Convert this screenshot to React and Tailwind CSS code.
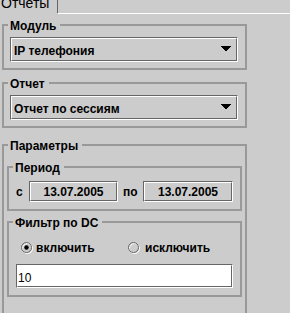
import React from "react";

function Group({ title, className, children }) {
  return (
    <div className={"relative border-2 border-[#999999] " + className}>
      <span className="absolute left-[4px] top-[-7px] bg-[#cccccc] pl-[2px] pr-[4px] text-[12px] font-bold leading-[14px] text-black whitespace-nowrap">
        {title}
      </span>
      {children}
    </div>
  );
}

function Flush({ className, innerClassName, children }) {
  return (
    <div className={"border border-t-[#666666] border-l-[#666666] border-r-white border-b-white " + className}>
      <div className={"h-full border border-t-white border-l-white border-r-[#666666] border-b-[#666666] " + innerClassName}>
        {children}
      </div>
    </div>
  );
}

function Arrow() {
  return (
    <svg width="10" height="5" viewBox="0 0 10 5" shapeRendering="crispEdges" className="mt-[7px] shrink-0">
      <rect x="0" y="0" width="10" height="1" fill="#000" />
      <rect x="1" y="1" width="8" height="1" fill="#000" />
      <rect x="2" y="2" width="6" height="1" fill="#000" />
      <rect x="3" y="3" width="4" height="1" fill="#000" />
      <rect x="4" y="4" width="2" height="1" fill="#000" />
    </svg>
  );
}

function Combo({ text }) {
  return (
    <Flush className="h-[25px] w-[228px] ml-[6px]" innerClassName="flex items-start justify-between pl-[2px] pr-[5px]">
      <span className="mt-[5px] text-[12px] font-bold leading-[14px] text-black whitespace-nowrap">{text}</span>
      <Arrow />
    </Flush>
  );
}

function Radio({ checked }) {
  return (
    <svg width="12" height="12" viewBox="0 0 12 12" className="shrink-0">
      <circle cx="6.5" cy="6.5" r="5" fill="none" stroke="#ffffff" strokeWidth="1" />
      <circle cx="5.5" cy="5.5" r="5" fill="none" stroke="#666666" strokeWidth="1" />
      {checked && <circle cx="5.5" cy="5.5" r="2.2" fill="#000000" />}
    </svg>
  );
}

export default function App() {
  return (
    <div className="w-[290px] h-[313px] overflow-hidden bg-[#cccccc] font-['Liberation_Sans',Arial,sans-serif] text-black">
      {/* tab strip */}
      <div className="flex h-[14px]">
        <div className="h-[13px] w-[58px] border-r border-[#666666] overflow-hidden">
          <div className="mt-[-4px] pl-[1px] text-[14px] leading-[14px] whitespace-nowrap">Отчеты</div>
        </div>
        <div className="flex-1 border-b border-white" />
      </div>

      <Group title="Модуль" className="ml-[2px] mt-[10px] w-[245px] pt-[11px] pb-[6px]">
        <Combo text="IP телефония" />
      </Group>

      <Group title="Отчет" className="ml-[2px] mt-[12px] w-[245px] pt-[11px] pb-[6px]">
        <Combo text="Отчет по сессиям" />
      </Group>

      <Group title="Параметры" className="ml-[2px] mt-[16px] w-[245px] pt-[20px] pb-[30px] px-[3px]">
        <Group title="Период" className="w-[235px] pt-[13px] pb-[7px]">
          <div className="flex items-center pl-[7px] text-[12px] font-bold leading-[14px]">
            <span className="w-[13px]">с</span>
            <Flush className="h-[21px] w-[89px]" innerClassName="flex items-center justify-center">
              <span>13.07.2005</span>
            </Flush>
            <span className="ml-[5px] w-[20px]">по</span>
            <Flush className="h-[21px] w-[90px]" innerClassName="flex items-center justify-center">
              <span>13.07.2005</span>
            </Flush>
          </div>
        </Group>

        <Group title="Фильтр по DC" className="mt-[10px] w-[235px] pt-[19px] pb-[7px]">
          <div className="flex h-[12px] items-center pl-[12px] text-[12px] font-bold leading-[14px]">
            <div className="flex w-[107px] items-center gap-[3px]">
              <Radio checked />
              <span>включить</span>
            </div>
            <div className="flex items-center gap-[5px]">
              <Radio />
              <span>исключить</span>
            </div>
          </div>
          <Flush className="mt-[10px] ml-[7px] h-[24px] w-[217px] bg-white" innerClassName="pt-[5px] pl-0">
            <div className="text-[12px] leading-[14px]">10</div>
          </Flush>
        </Group>
      </Group>
    </div>
  );
}
